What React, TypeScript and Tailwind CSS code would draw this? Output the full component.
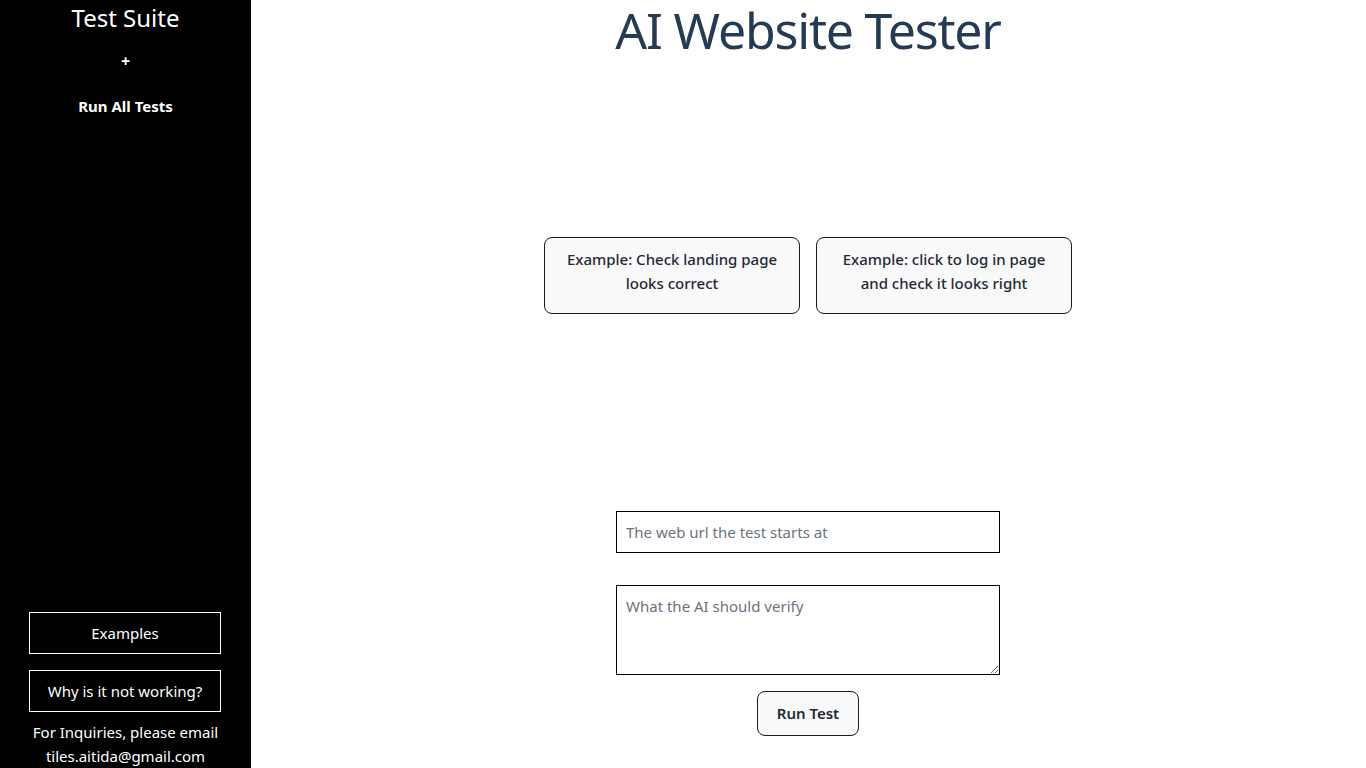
import React, { useState } from 'react';

const font = { fontFamily: '"Noto Sans", "Open Sans", sans-serif' };

const Sidebar: React.FC = () => {
  return (
    <aside className="w-[251px] h-screen bg-black text-white flex flex-col justify-between shrink-0">
      <div className="flex flex-col items-center w-full">
        <h2 className="text-[24px] leading-[36px]">Test Suite</h2>
        <button className="mt-[13px] text-[16px] leading-[24px] font-bold">+</button>
        <button className="mt-[21px] text-[15px] leading-[24px] font-bold">Run All Tests</button>
      </div>

      <div className="flex flex-col w-full">
        <button className="ml-[29px] w-[192px] h-[42px] border border-white text-[15px]">Examples</button>
        <button className="ml-[29px] mt-[16px] w-[192px] h-[42px] border border-white text-[15px]">
          Why is it not working?
        </button>
        <p className="mt-[8px] text-center text-[15px] leading-[24px]">
          For Inquiries, please email
          <br />
          tiles.aitida@gmail.com
        </p>
      </div>
    </aside>
  );
};

export default function App() {
  const [url, setUrl] = useState('');
  const [prompt, setPrompt] = useState('');

  const examples = [
    'Example: Check landing page looks correct',
    'Example: click to log in page and check it looks right',
  ];

  return (
    <div className="flex h-screen bg-white overflow-hidden" style={font}>
      <Sidebar />

      <main className="flex-1 flex flex-col items-center pr-px">
        <h1 className="text-[50px] leading-[60px] text-[#243b53] tracking-[-1.2px]">AI Website Tester</h1>

        <div className="mt-[177px] flex gap-4">
          {examples.map((ex) => (
            <button
              key={ex}
              className="w-[256px] h-[77px] px-4 pt-[9px] flex flex-col items-center justify-start border border-[#1a1a1a] rounded-lg bg-[#f9f9f9] text-[15px] leading-[24px] font-medium text-[#1f2937]"
            >
              {ex}
            </button>
          ))}
        </div>

        <input
          type="text"
          placeholder="The web url the test starts at"
          value={url}
          onChange={(e) => setUrl(e.target.value)}
          className="mt-[197px] w-[384px] h-[42px] px-[9px] border border-black text-[15px] placeholder:text-[#6b7280] outline-none"
        />

        <textarea
          placeholder="What the AI should verify"
          value={prompt}
          onChange={(e) => setPrompt(e.target.value)}
          className="mt-[32px] w-[384px] h-[90px] px-[9px] py-[9px] border border-black text-[15px] placeholder:text-[#6b7280] outline-none"
        />

        <button className="mt-[16px] w-[102px] h-[45px] border border-[#1a1a1a] rounded-lg bg-[#f9f9f9] text-[15px] font-semibold text-[#1f2937]">
          Run Test
        </button>
      </main>
    </div>
  );
}
